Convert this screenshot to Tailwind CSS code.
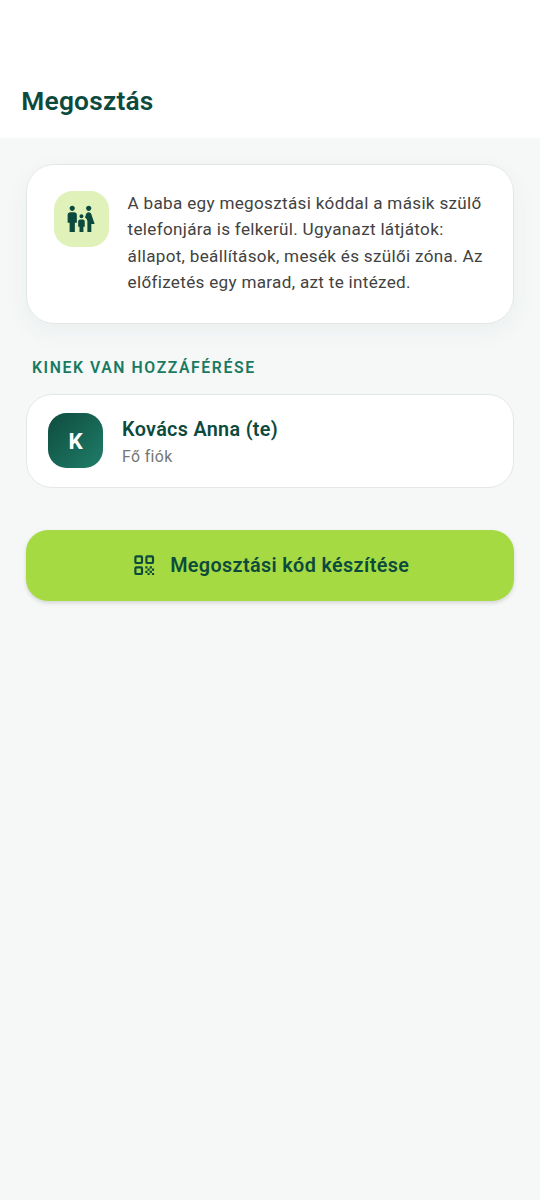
<!DOCTYPE html>
<html lang="hu">
<head>
<meta charset="utf-8">
<title>Megosztás</title>
<script src="https://cdn.jsdelivr.net/npm/@tailwindcss/browser@4"></script>
</head>
<body class="min-h-[1200px] bg-[#f6f8f8] font-[Roboto,sans-serif] text-[#0d4a3e]">
<header class="h-[137.5px] bg-white pl-[21.3px] pt-[83px]">
  <h1 class="text-[26.3px] leading-[36px] font-semibold tracking-[0.22px]">Megosztás</h1>
</header>
<main class="px-[26px] pt-[26.5px]">
  <section class="flex h-[160px] items-start gap-[18.8px] rounded-[28px] border-[1.3px] border-[#e3e8e7] bg-white px-[26.5px] pt-[26.3px] shadow-[0_8px_24px_rgba(13,74,62,0.05)]">
    <div class="flex size-[55.3px] shrink-0 items-center justify-center rounded-[18.5px] bg-[#e0f2ba]">
      <svg class="size-[31.6px]" viewBox="0 0 24 24" fill="currentColor"><path d="M16 4c0-1.11.89-2 2-2s2 .89 2 2-.89 2-2 2-2-.89-2-2zm4 18v-6h2.5l-2.54-7.63C19.68 7.55 18.92 7 18.06 7h-.12c-.86 0-1.63.55-1.9 1.37l-.86 2.58c1.08.6 1.82 1.73 1.82 3.05v8h3zm-7.5-10.5c.83 0 1.5-.67 1.5-1.5s-.67-1.5-1.5-1.5S11 9.17 11 10s.67 1.5 1.5 1.5zM5.5 6c1.11 0 2-.89 2-2s-.89-2-2-2-2 .89-2 2 .89 2 2 2zm2 16v-7H9V9c0-1.1-.9-2-2-2H4c-1.1 0-2 .9-2 2v6h1.5v7h4zm6.5 0v-4h1v-4c0-.82-.68-1.5-1.5-1.5h-2c-.82 0-1.5.68-1.5 1.5v4h1v4h3z"/></svg>
    </div>
    <p class="-mt-[1.4px] text-[17.1px] leading-[26.35px] tracking-[0.31px] whitespace-nowrap text-[#424242]">A baba egy megosztási kóddal a másik szülő<br>telefonjára is felkerül. Ugyanazt látjátok:<br>állapot, beállítások, mesék és szülői zóna. Az<br>előfizetés egy marad, azt te intézed.</p>
  </section>
  <h2 class="mt-[33px] pl-[6px] text-[15.8px] leading-[22px] font-semibold tracking-[1.57px] text-[#1a7a61]">KINEK VAN HOZZÁFÉRÉSE</h2>
  <section class="mt-[14.5px] flex h-[94px] items-center gap-[18.8px] rounded-[26px] border-[1.3px] border-[#e3e8e7] bg-white px-[21px]">
    <div class="flex size-[55.3px] shrink-0 items-center justify-center rounded-[18.5px] bg-linear-to-br from-[#0f4c3f] to-[#1f7e69] pt-[2px] text-[22.4px] font-bold text-white">K</div>
    <div class="pt-[4px]">
      <div class="text-[19.8px] leading-[28px] font-semibold tracking-[0.32px]">Kovács Anna (te)</div>
      <div class="mt-px text-[15.8px] leading-[24px] tracking-[0.38px] text-[#757575]">Fő fiók</div>
    </div>
  </section>
  <button class="mt-[42.5px] flex h-[71px] w-full items-center justify-center gap-[13px] rounded-[22px] bg-[#a5da42] shadow-[0_2px_4px_rgba(0,0,0,0.14)]">
    <svg class="size-[26.4px]" viewBox="0 0 24 24" fill="currentColor"><g fill="none" stroke="currentColor" stroke-width="2"><rect x="4" y="4" width="6" height="6" rx="1"/><rect x="14" y="4" width="6" height="6" rx="1"/><rect x="4" y="14" width="6" height="6" rx="1"/></g><path d="M13 13h2v2h-2zM17 13h2v2h-2zM15 15h2v2h-2zM19 15h2v2h-2zM13 17h2v2h-2zM17 17h2v2h-2zM15 19h2v2h-2zM19 19h2v2h-2z"/></svg>
    <span class="text-[19.8px] leading-[28px] font-semibold tracking-[0.37px]">Megosztási kód készítése</span>
  </button>
</main>
</body>
</html>
